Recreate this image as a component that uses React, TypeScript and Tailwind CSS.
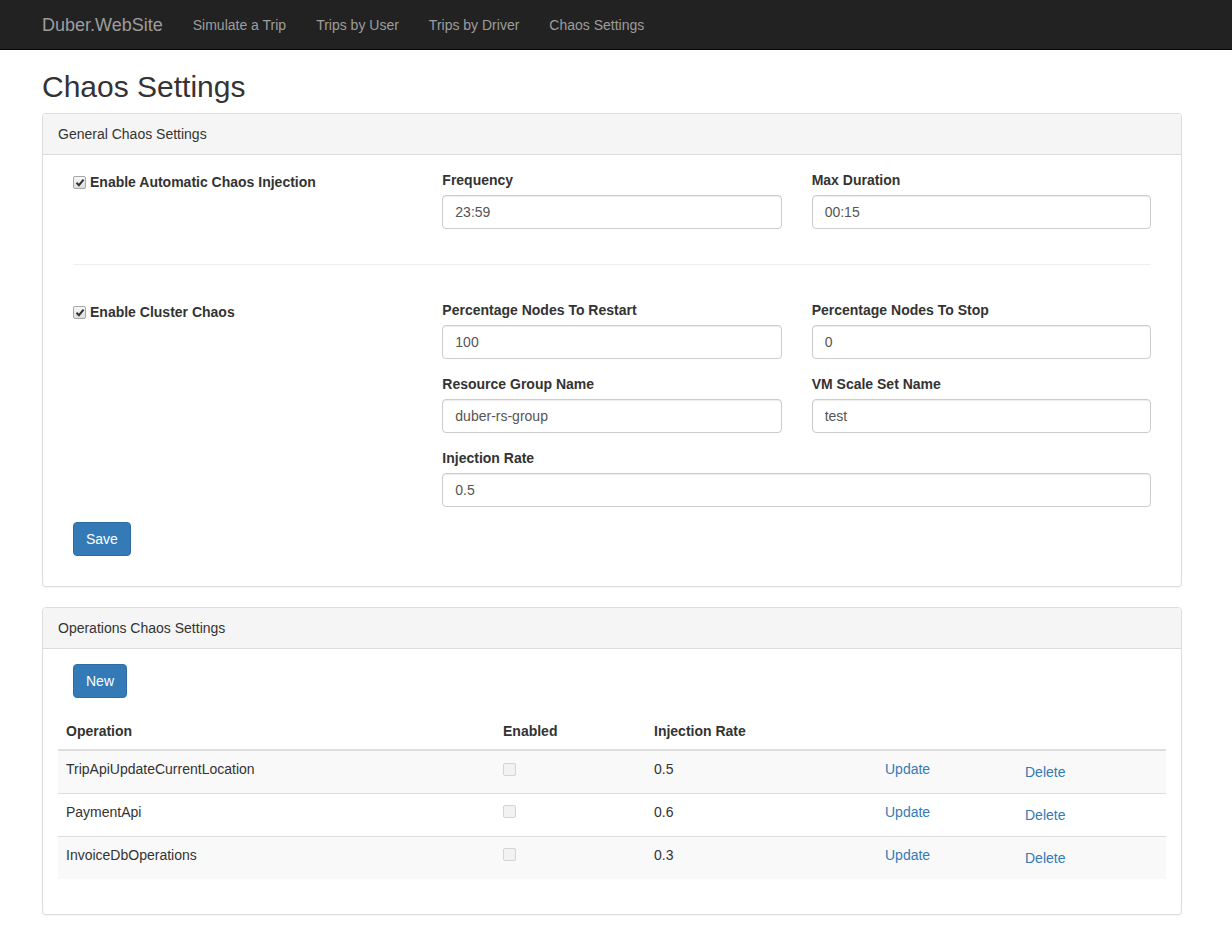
import React from "react";

const navLinks = ["Simulate a Trip", "Trips by User", "Trips by Driver", "Chaos Settings"];

const operations = [
  { name: "TripApiUpdateCurrentLocation", rate: "0.5" },
  { name: "PaymentApi", rate: "0.6" },
  { name: "InvoiceDbOperations", rate: "0.3" },
];

function CheckBox({ checked, disabled }: { checked?: boolean; disabled?: boolean }) {
  return (
    <span
      className={`inline-flex h-[13px] w-[13px] shrink-0 items-center justify-center rounded-[2px] border ${
        disabled ? "border-[#d4d4d4] bg-[#f2f2f2]" : "border-[#a6a6a6] bg-gradient-to-b from-[#f7f7f7] to-[#dedede]"
      }`}
    >
      {checked && (
        <svg width="10" height="9" viewBox="0 0 10 9">
          <path d="M1.5 4.8 L3.9 7.2 L8.6 1.6" fill="none" stroke="#333" strokeWidth="2" />
        </svg>
      )}
    </span>
  );
}

function Field({ label, value }: { label: string; value: string }) {
  return (
    <div className="mb-[15px]">
      <div className="mb-[5px] text-[14px] font-bold leading-[20px] text-[#333]">{label}</div>
      <div className="flex h-[34px] items-center rounded-[4px] border border-[#ccc] bg-white px-[12px] text-[14px] text-[#555] shadow-[inset_0_1px_1px_rgba(0,0,0,0.075)]">
        {value}
      </div>
    </div>
  );
}

function CheckLabel({ text }: { text: string }) {
  return (
    <div className="mt-[2px] flex h-[20px] items-center gap-[4px] text-[14px] font-bold text-[#333]">
      <CheckBox checked />
      <span>{text}</span>
    </div>
  );
}

function Panel({ title, children }: { title: string; children: React.ReactNode }) {
  return (
    <div className="mb-[20px] rounded-[4px] border border-[#ddd] bg-white shadow-[0_1px_1px_rgba(0,0,0,0.05)]">
      <div className="rounded-t-[3px] border-b border-[#ddd] bg-[#f5f5f5] px-[15px] py-[10px] text-[14px] leading-[20px] text-[#333]">
        {title}
      </div>
      <div className="p-[15px]">{children}</div>
    </div>
  );
}

function BlueButton({ children }: { children: React.ReactNode }) {
  return (
    <button className="h-[34px] rounded-[4px] border border-[#2e6da4] bg-[#337ab7] px-[12px] text-[14px] leading-[20px] text-white">
      {children}
    </button>
  );
}

export default function App() {
  return (
    <div
      className="h-[932px] overflow-hidden bg-white text-[14px] text-[#333]"
      style={{ fontFamily: '"Liberation Sans", Arial, sans-serif' }}
    >
      {/* Navbar */}
      <div className="h-[50px] border-b border-[#080808] bg-[#222]">
        <div className="ml-[42px] flex h-[50px] items-center">
          <span className="pr-[15px] text-[18px] leading-[20px] text-[#9d9d9d]">Duber.WebSite</span>
          {navLinks.map((l) => (
            <span key={l} className="px-[15px] text-[14px] leading-[20px] text-[#9d9d9d]">
              {l}
            </span>
          ))}
        </div>
      </div>

      <div className="ml-[42px] w-[1140px]">
        <h2 className="mb-[10px] mt-[20px] text-[30px] font-normal leading-[33px] text-[#333]">Chaos Settings</h2>

        <Panel title="General Chaos Settings">
          <div className="px-[15px]">
            <div className="grid grid-cols-3 gap-x-[30px]">
              <CheckLabel text="Enable Automatic Chaos Injection" />
              <Field label="Frequency" value="23:59" />
              <Field label="Max Duration" value="00:15" />
            </div>

            <hr className="my-[20px] border-t border-[#eee]" />

            <div className="grid grid-cols-3 gap-x-[30px] pt-[15px]">
              <CheckLabel text="Enable Cluster Chaos" />
              <div className="col-span-2 grid grid-cols-2 gap-x-[30px]">
                <Field label="Percentage Nodes To Restart" value="100" />
                <Field label="Percentage Nodes To Stop" value="0" />
                <Field label="Resource Group Name" value="duber-rs-group" />
                <Field label="VM Scale Set Name" value="test" />
                <div className="col-span-2">
                  <Field label="Injection Rate" value="0.5" />
                </div>
              </div>
            </div>

            <div className="mb-[15px]">
              <BlueButton>Save</BlueButton>
            </div>
          </div>
        </Panel>

        <Panel title="Operations Chaos Settings">
          <div className="px-[15px]">
            <BlueButton>New</BlueButton>
          </div>
          <table className="mb-[20px] mt-[15px] w-full border-collapse text-left">
            <thead>
              <tr className="border-b-2 border-[#ddd]">
                <th className="w-[437px] p-[8px] font-bold leading-[20px]">Operation</th>
                <th className="w-[151px] p-[8px] font-bold leading-[20px]">Enabled</th>
                <th className="w-[231px] p-[8px] font-bold leading-[20px]">Injection Rate</th>
                <th className="w-[140px] p-[8px]"></th>
                <th className="p-[8px]"></th>
              </tr>
            </thead>
            <tbody>
              {operations.map((op, i) => (
                <tr key={op.name} className={`border-t border-[#ddd] ${i % 2 === 0 ? "bg-[#f9f9f9]" : ""}`}>
                  <td className="h-[43px] px-[8px] pt-[8px] align-top leading-[20px]">{op.name}</td>
                  <td className="px-[8px] pt-[8px] align-top leading-[20px]">
                    <div className="flex h-[20px] items-center">
                      <CheckBox disabled />
                    </div>
                  </td>
                  <td className="px-[8px] pt-[8px] align-top leading-[20px]">{op.rate}</td>
                  <td className="px-[8px] pt-[8px] align-top leading-[20px] text-[#337ab7]">Update</td>
                  <td className="px-[8px] pt-[11px] align-top leading-[20px] text-[#337ab7]">Delete</td>
                </tr>
              ))}
            </tbody>
          </table>
        </Panel>
      </div>
    </div>
  );
}
